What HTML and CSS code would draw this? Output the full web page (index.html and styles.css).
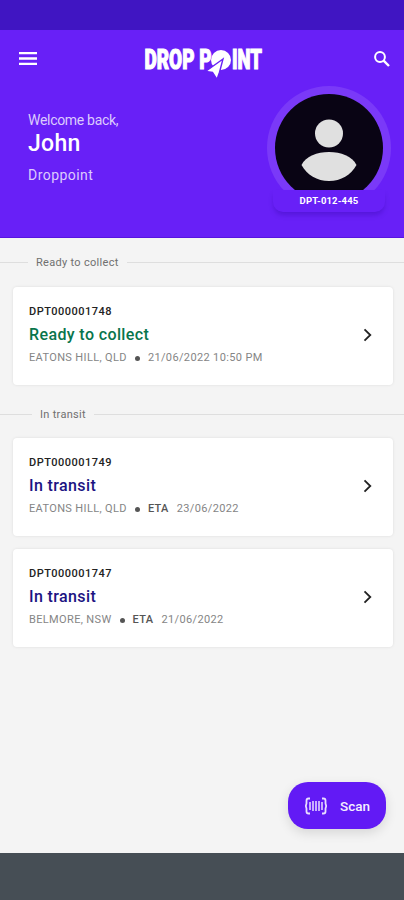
FILE: index.html
```html
<!DOCTYPE html>
<html lang="en">
<head>
    <meta charset="UTF-8">
    <meta name="viewport" content="width=device-width, initial-scale=1.0">
    <title>Drop Point</title>
    <link rel="stylesheet" href="styles.css">
</head>
<body>
    <div class="app">
        <div class="status-bar"></div>

        <header class="header">
            <div class="toolbar">
                <svg class="menu-icon" width="20" height="16" viewBox="0 0 20 16">
                    <path d="M1 2.200h18M1 7.500h18M1 12.800h18" stroke="#fff" stroke-width="2.300"/>
                </svg>
                <svg class="logo" width="124" height="50" viewBox="0 0 124 50">
                    <g class="logo-text" transform="scale(1 1.450)">
                        <text x="1.500" y="22.900" textLength="67" lengthAdjust="spacingAndGlyphs">DROP P</text>
                        <text x="89" y="22.900" textLength="30" lengthAdjust="spacingAndGlyphs">INT</text>
                    </g>
                    <circle cx="78" cy="24" r="10" fill="#fff"/>
                    <path d="M80 23 62.500 35.500l7 .8 4.500 7 2.500-7z" fill="#fff" stroke="#6820f7" stroke-width="1.400"/>
                </svg>
                <svg class="search-icon" width="18" height="18" viewBox="0 0 18 18" fill="none" stroke="#fff" stroke-width="2">
                    <circle cx="7" cy="7" r="4.900"/>
                    <path d="M10.600 10.600 16 16" stroke-width="2.400"/>
                </svg>
            </div>

            <div class="profile">
                <div class="greeting">
                    <p class="welcome">Welcome back,</p>
                    <h1>John</h1>
                    <p class="company">Droppoint</p>
                </div>
                <div class="avatar">
                    <svg width="124" height="124" viewBox="0 0 124 124">
                        <circle cx="62" cy="62" r="62" fill="#7a39f8"/>
                        <circle cx="62" cy="62" r="54" fill="#090414"/>
                        <circle cx="62" cy="47.500" r="14" fill="#e0e0e0"/>
                        <path d="M34.500 79C39 70 50 66 62 66s23 4 27.500 13C84 89 74 95 62 95s-22-6-27.500-16z" fill="#e0e0e0"/>
                    </svg>
                    <span class="member-id">DPT-012-445</span>
                </div>
            </div>
        </header>

        <main class="content">
            <h2 class="divider ready"><span>Ready to collect</span></h2>
            <div class="card">
                <div>
                    <p class="parcel-id">DPT000001748</p>
                    <h3 class="state collect">Ready to collect</h3>
                    <p class="meta"><span>EATONS HILL, QLD</span><i class="dot"></i><span>21/06/2022 10:50 PM</span></p>
                </div>
                <svg class="chevron" width="10" height="14" viewBox="0 0 10 14"><path d="M1.500 1.300 7.300 7l-5.800 5.700"/></svg>
            </div>

            <h2 class="divider transit"><span>In transit</span></h2>
            <div class="card">
                <div>
                    <p class="parcel-id">DPT000001749</p>
                    <h3 class="state moving">In transit</h3>
                    <p class="meta"><span>EATONS HILL, QLD</span><i class="dot"></i><b>ETA</b><span>23/06/2022</span></p>
                </div>
                <svg class="chevron" width="10" height="14" viewBox="0 0 10 14"><path d="M1.500 1.300 7.300 7l-5.800 5.700"/></svg>
            </div>
            <div class="card">
                <div>
                    <p class="parcel-id">DPT000001747</p>
                    <h3 class="state moving">In transit</h3>
                    <p class="meta"><span>BELMORE, NSW</span><i class="dot"></i><b>ETA</b><span>21/06/2022</span></p>
                </div>
                <svg class="chevron" width="10" height="14" viewBox="0 0 10 14"><path d="M1.500 1.300 7.300 7l-5.800 5.700"/></svg>
            </div>

            <button class="scan-btn">
                <svg width="22" height="18" viewBox="0 0 22 18" fill="none" stroke="#e9deff">
                    <path d="M5 1.500H3.500Q1.500 1.500 1.500 3.500v3L.8 9l.7 2.500v3q0 2 2 2H5M17 1.500h1.500q2 0 2 2v3l.7 2.500-.7 2.500v3q0 2-2 2H17" stroke-width="1.800"/>
                    <path d="M5 5v8M8 4v10M11 4v10M14 4v10M17 5v8" stroke-width="1.500"/>
                </svg>
                <span>Scan</span>
            </button>
        </main>

        <div class="nav-bar"></div>
    </div>
</body>
</html>
```

FILE: styles.css
```css
* {
    margin: 0;
    padding: 0;
    box-sizing: border-box;
}

body {
    font-family: Roboto, "Noto Sans", sans-serif;
    background: #f4f4f4;
}

.app {
    width: 404px;
    height: 900px;
    display: flex;
    flex-direction: column;
    overflow: hidden;
}

.status-bar {
    height: 30px;
    background: #4015c2;
}

.header {
    height: 208px;
    background: #6820f7;
    border-bottom: 1px solid #5714e0;
}

.toolbar {
    height: 56px;
    display: flex;
    align-items: center;
    justify-content: space-between;
    padding: 0 13px 0 18px;
}

.menu-icon {
    margin-top: 2px;
}

.logo {
    margin: 5px 2px 0 0;
}

.logo-text {
    font-size: 18.5px;
    font-weight: 900;
    fill: #fff;
    stroke: #fff;
    stroke-width: 0.8px;
}

.search-icon {
    margin-top: 2px;
}

.profile {
    display: flex;
    justify-content: space-between;
    padding: 0 13px 0 28px;
}

.greeting {
    padding-top: 25px;
    color: #fff;
}

.welcome,
.company {
    font-size: 14px;
    line-height: 18px;
    color: #dccbfd;
}

.welcome {
    letter-spacing: -0.3px;
}

.greeting h1 {
    margin-top: 1px;
    font-size: 23px;
    line-height: 28px;
    font-weight: 500;
    letter-spacing: 0.3px;
}

.company {
    margin-top: 8px;
    letter-spacing: 0.45px;
}

.avatar {
    position: relative;
    width: 124px;
    height: 126px;
}

.avatar svg {
    display: block;
}

.member-id {
    position: absolute;
    left: 6px;
    bottom: 0;
    width: 112px;
    height: 22px;
    border-radius: 0 0 10px 10px;
    background: #6820f7;
    box-shadow: 0 4px 5px -1px rgba(50, 5, 160, 0.35);
    color: #fff;
    font-size: 9.5px;
    font-weight: 700;
    line-height: 22px;
    letter-spacing: 0.15px;
    text-align: center;
}

.content {
    flex: 1;
    display: flex;
    flex-direction: column;
}

.divider {
    display: flex;
    align-items: center;
    gap: 8px;
    height: 49px;
    color: #707070;
    font-size: 11px;
    font-weight: 400;
    letter-spacing: 0.3px;
}

.divider::before,
.divider::after {
    content: "";
    height: 1px;
    background: #dedede;
}

.divider::before {
    width: 28px;
}

.divider::after {
    flex: 1;
}

.transit {
    margin-top: 5px;
    height: 48px;
}

.transit::before {
    width: 32px;
}

.card {
    display: flex;
    align-items: center;
    justify-content: space-between;
    width: 380px;
    height: 98px;
    margin-left: 13px;
    padding: 0 20px 2px 16px;
    background: #fff;
    border-radius: 4px;
    box-shadow: 0 0 3px rgba(0, 0, 0, 0.1);
}

.card + .card {
    margin-top: 13px;
}

.parcel-id {
    color: #222;
    font-size: 11px;
    font-weight: 500;
    line-height: 16px;
    letter-spacing: 0.48px;
}

.state {
    margin-top: 4px;
    font-size: 16px;
    font-weight: 500;
    line-height: 22px;
    letter-spacing: 0.38px;
}

.collect {
    color: #08754c;
}

.moving {
    color: #1c1382;
}

.meta {
    display: flex;
    align-items: center;
    margin-top: 4px;
    color: #858585;
    font-size: 11px;
    line-height: 16px;
    letter-spacing: 0.36px;
}

.meta b {
    margin-right: 8px;
    color: #555;
    font-weight: 500;
}

.dot {
    width: 5px;
    height: 5px;
    margin: 1px 8px 0;
    border-radius: 50%;
    background: #555;
}

.chevron {
    fill: none;
    stroke: #222;
    stroke-width: 1.8;
}

.scan-btn {
    display: flex;
    align-items: center;
    gap: 13px;
    align-self: flex-end;
    width: 98px;
    height: 47px;
    margin: auto 18px 24px 0;
    padding-left: 17px;
    border: none;
    border-radius: 20px;
    background: #621af5;
    box-shadow: 0 4px 12px rgba(0, 0, 0, 0.12);
    color: #f5efff;
    font-family: inherit;
    font-size: 13.5px;
    font-weight: 500;
}

.nav-bar {
    height: 47px;
    background: #464e55;
}
```
